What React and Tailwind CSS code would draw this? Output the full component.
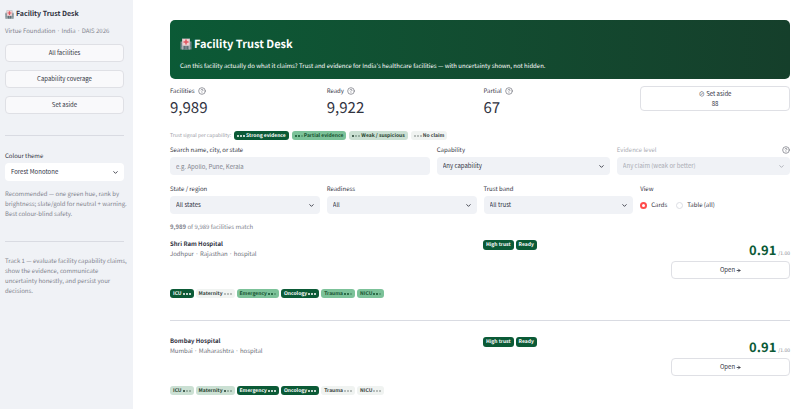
import { useId, useState } from "react";
import { ArrowRight, ChevronDown, CircleHelp } from "lucide-react";

const RULE = "border-0 border-t border-[#d9dbe2]";
const BUTTON =
  "flex w-full items-center justify-center rounded-[4px] border border-[#dfe0e5] text-[6px] leading-[10px] text-[#31333f]";

const TONES = {
  strong: { dots: "●●●", style: "bg-[#0b5a36] text-white" },
  partial: { dots: "●●○", style: "bg-[#7cc299] text-[#14502f]" },
  weak: { dots: "●○○", style: "bg-[#cbe0d3] text-[#1f3d2c]" },
  none: { dots: "○○○", style: "bg-[#f0f3f1] text-[#33403a]" },
};

const LEGEND = [
  ["strong", "Strong evidence"],
  ["partial", "Partial evidence"],
  ["weak", "Weak / suspicious"],
  ["none", "No claim"],
];

const FACILITIES = [
  {
    name: "Shri Ram Hospital",
    place: "Jodhpur · Rajasthan · hospital",
    score: "0.91",
    claims: [
      ["ICU", "strong"],
      ["Maternity", "none"],
      ["Emergency", "partial"],
      ["Oncology", "strong"],
      ["Trauma", "partial"],
      ["NICU", "partial"],
    ],
  },
  {
    name: "Bombay Hospital",
    place: "Mumbai · Maharashtra · hospital",
    score: "0.91",
    claims: [
      ["ICU", "weak"],
      ["Maternity", "weak"],
      ["Emergency", "strong"],
      ["Oncology", "strong"],
      ["Trauma", "none"],
      ["NICU", "none"],
    ],
  },
];

function HospitalIcon({ className }) {
  return (
    <svg viewBox="0 0 24 24" className={className} aria-hidden="true">
      <path d="M1 7h5v16H1zM18 7h5v16h-5z" fill="#7f8c90" />
      <path d="M4 1h16v22H4z" fill="#a9b1b4" />
      <path d="M2 11h2v2H2zM2 15h2v2H2zM20 11h2v2h-2zM20 15h2v2h-2z" fill="#5c7480" />
      <rect x="5" y="2" width="14" height="13" rx="1" fill="#f0cfd0" />
      <path d="M10.500 3h3v3.500H17v3h-3.500V13h-3V9.500H7v-3h3.500z" fill="#e0555f" />
      <path d="M7 16h10v7H7z" fill="#5f6f76" />
      <path d="M11.500 16h1v7h-1z" fill="#b9c1c4" />
    </svg>
  );
}

function Dots({ tone }) {
  return (
    <span className="flex gap-px" role="img" aria-label={tone}>
      {[...TONES[tone].dots].map((dot, i) => (
        <span
          key={i}
          className={
            dot === "●"
              ? "size-[2px] rounded-full bg-current"
              : "size-[2px] rounded-full bg-current opacity-40"
          }
        />
      ))}
    </span>
  );
}

function Pill({ tone, label, dotsFirst }) {
  return (
    <span
      className={`flex h-[9px] items-center gap-px rounded-[3px] px-[3px] text-[5px] leading-[9px] font-bold whitespace-nowrap ${TONES[tone].style}`}
    >
      {dotsFirst && <Dots tone={tone} />}
      {label}
      {!dotsFirst && <Dots tone={tone} />}
    </span>
  );
}

function Select({ label, value, help, disabled, white }) {
  const id = useId();
  return (
    <div className="min-w-0">
      <div className="flex h-[10px] items-center justify-between">
        <label
          htmlFor={id}
          className={`text-[6px] leading-[10px] ${disabled ? "text-[#a9abb3]" : "text-[#31333f]"}`}
        >
          {label}
        </label>
        {help && <CircleHelp className="size-[8px] text-[#6b6d77]" />}
      </div>
      <div className="relative mt-[2px]">
        <select
          id={id}
          disabled={disabled}
          className={`block h-[18px] w-full appearance-none rounded-[4px] px-[6px] text-[6px] leading-[10px] ${
            white ? "bg-white" : "bg-[#f0f2f6]"
          } ${disabled ? "text-[#a9abb3]" : "text-[#31333f]"}`}
        >
          <option>{value}</option>
        </select>
        <ChevronDown
          strokeWidth={3}
          className={`pointer-events-none absolute top-[6px] right-[5px] size-[7px] ${
            disabled ? "text-[#a9abb3]" : "text-[#31333f]"
          }`}
        />
      </div>
    </div>
  );
}

function Metric({ label, value }) {
  return (
    <div>
      <div className="flex h-[10px] items-center gap-[3px] text-[6px] leading-[10px]">
        {label}
        <CircleHelp className="size-[8px] text-[#6b6d77]" />
      </div>
      <div className="text-[15px] leading-[24px]">{value}</div>
    </div>
  );
}

function Radio({ label, checked, onChange }) {
  return (
    <label className="flex items-center gap-[4px] text-[6px] leading-[10px]">
      <input
        type="radio"
        name="view"
        checked={checked}
        onChange={onChange}
        className="size-[7px] appearance-none rounded-full border border-[#dcdee4] bg-white checked:border-2 checked:border-[#ff4b4b]"
      />
      {label}
    </label>
  );
}

function Facility({ facility }) {
  return (
    <article>
      <div className="grid grid-cols-[306fr_181fr_119fr] gap-[7px]">
        <div>
          <h2 className="text-[6px] leading-[10px] font-bold">{facility.name}</h2>
          <p className="text-[6px] leading-[10px] text-[#6b6d77]">{facility.place}</p>
        </div>
        <div className="flex items-start gap-[2px] pt-px">
          {["High trust", "Ready"].map((badge) => (
            <span
              key={badge}
              className="rounded-[3px] bg-[#0b5a36] px-[3px] text-[5px] leading-[10px] font-bold text-white"
            >
              {badge}
            </span>
          ))}
        </div>
        <div>
          <div className="flex h-[22px] items-baseline justify-end gap-[2px] leading-[22px]">
            <span className="text-[13px] font-bold text-[#0b5a36]">{facility.score}</span>
            <span className="text-[5px] text-[#82848e]">/1.00</span>
          </div>
          <button type="button" className={`${BUTTON} h-[18px] gap-px bg-white`}>
            Open
            <ArrowRight strokeWidth={4} className="size-[5px]" />
          </button>
        </div>
      </div>
      <div className="mt-[10px] flex gap-[2px]">
        {facility.claims.map(([label, tone]) => (
          <Pill key={label} label={label} tone={tone} />
        ))}
      </div>
    </article>
  );
}

export default function App() {
  const [view, setView] = useState("cards");
  const searchId = useId();

  return (
    <div className="flex h-screen overflow-hidden bg-white font-['Noto_Sans_CJK_KR','Noto_Sans',sans-serif] text-[#31333f] [text-rendering:geometricPrecision]">
      <aside className="w-[133px] shrink-0 bg-[#f0f2f6] pr-[9px] pl-[5px]">
        <h2 className="flex items-center gap-[2px] pt-[8px] text-[7px] leading-[12px] font-bold">
          <HospitalIcon className="size-[9px]" />
          Facility Trust Desk
        </h2>
        <p className="mt-[6px] text-[6px] leading-[10px] text-[#82848e]">
          Virtue Foundation · India · DAIS 2026
        </p>
        <nav className="mt-[8px] flex flex-col gap-[8px]">
          {["All facilities", "Capability coverage", "Set aside"].map((item) => (
            <button key={item} type="button" className={`${BUTTON} h-[18px] bg-[#f9f9fb]`}>
              {item}
            </button>
          ))}
        </nav>
        <hr className={`${RULE} mt-[21px] mb-[15px]`} />
        <Select label="Colour theme" value="Forest Monotone" white />
        <p className="mt-[8px] -mr-[7px] text-[6px] leading-[10px] text-[#82848e]">
          Recommended — one green hue, rank by brightness; slate/gold for neutral + warning. Best
          colour-blind safety.
        </p>
        <hr className={`${RULE} mt-[22px] mb-[14px]`} />
        <p className="-mr-[7px] text-[6px] leading-[10px] text-[#82848e]">
          Track 1 — evaluate facility capability claims, show the evidence, communicate uncertainty
          honestly, and persist your decisions.
        </p>
      </aside>

      <main className="min-w-0 flex-1 overflow-hidden pt-[20px] pr-[16px] pl-[37px]">
        <header className="rounded-[5px] bg-linear-to-r from-[#0b5a36] to-[#153f2b] px-[10px] pt-[16px] pb-[8px] text-white">
          <h1 className="flex items-center gap-[2px] text-[11px] leading-[16px] font-bold">
            <HospitalIcon className="size-[12px]" />
            Facility Trust Desk
          </h1>
          <p className="mt-[9px] text-[6px] leading-[10px]">
            Can this facility actually do what it claims? Trust and evidence for India's healthcare
            facilities — with uncertainty shown, not hidden.
          </p>
        </header>

        <section className="mt-[7px] grid grid-cols-4 gap-[7px]">
          <Metric label="Facilities" value="9,989" />
          <Metric label="Ready" value="9,922" />
          <Metric label="Partial" value="67" />
          <button type="button" className={`${BUTTON} h-[25px] flex-col bg-white`}>
            <span>⊘ Set aside</span>
            <span>88</span>
          </button>
        </section>

        <div className="mt-[11px] flex items-center gap-[3px]">
          <span className="text-[5px] leading-[9px] text-[#9a9ca5]">Trust signal per capability:</span>
          {LEGEND.map(([tone, label]) => (
            <Pill key={tone} tone={tone} label={label} dotsFirst />
          ))}
        </div>

        <section className="mt-[5px] grid grid-cols-[3fr_2fr_2fr] gap-[7px]">
          <div>
            <label htmlFor={searchId} className="block text-[6px] leading-[10px]">
              Search name, city, or state
            </label>
            <input
              id={searchId}
              type="text"
              placeholder="e.g. Apollo, Pune, Kerala"
              className="mt-[2px] block h-[18px] w-full rounded-[4px] bg-[#f0f2f6] px-[6px] text-[6px] leading-[10px] placeholder:text-[#82848e]"
            />
          </div>
          <Select label="Capability" value="Any capability" />
          <Select label="Evidence level" value="Any claim (weak or better)" help disabled />
        </section>

        <section className="mt-[9px] grid grid-cols-4 gap-[7px]">
          <Select label="State / region" value="All states" />
          <Select label="Readiness" value="All" />
          <Select label="Trust band" value="All trust" />
          <fieldset>
            <legend className="text-[6px] leading-[10px]">View</legend>
            <div className="flex gap-[9px] pt-[6px]">
              <Radio label="Cards" checked={view === "cards"} onChange={() => setView("cards")} />
              <Radio
                label="Table (all)"
                checked={view === "table"}
                onChange={() => setView("table")}
              />
            </div>
          </fieldset>
        </section>

        <p className="mt-[8px] mb-[7px] text-[6px] leading-[10px] text-[#82848e]">
          <strong>9,989</strong> of 9,989 facilities match
        </p>

        <Facility facility={FACILITIES[0]} />
        <hr className={`${RULE} mt-[22px] mb-[15px]`} />
        <Facility facility={FACILITIES[1]} />
      </main>
    </div>
  );
}
